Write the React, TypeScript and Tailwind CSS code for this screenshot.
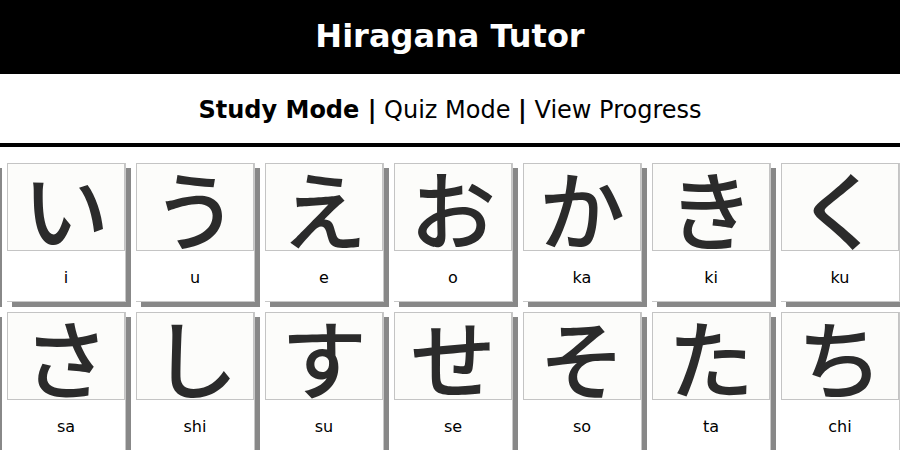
const rows: [string, string][][] = [
  [
    ["あ", "a"], ["い", "i"], ["う", "u"], ["え", "e"], ["お", "o"],
    ["か", "ka"], ["き", "ki"], ["く", "ku"], ["け", "ke"],
  ],
  [
    ["こ", "ko"], ["さ", "sa"], ["し", "shi"], ["す", "su"], ["せ", "se"],
    ["そ", "so"], ["た", "ta"], ["ち", "chi"], ["つ", "tsu"],
  ],
];

function Card({ kana, romaji }: { kana: string; romaji: string }) {
  return (
    <div className="w-[119px] shrink-0 bg-white border-r border-b border-[#c8c8c8] shadow-[5px_5px_0_#888]">
      <div className="h-[88px] border border-[#c4c4c4] bg-[#fcfcfa] flex items-center justify-center overflow-hidden">
        <span className="text-[86px] leading-[88px] font-medium text-[#2b2b2b] font-['Noto_Sans_CJK_JP',sans-serif]">
          {kana}
        </span>
      </div>
      <div className="h-[50px] pt-[3px] flex items-center justify-center text-[16px] text-black">
        {romaji}
      </div>
    </div>
  );
}

export default function App() {
  return (
    <div className="w-[900px] h-[450px] overflow-hidden bg-white font-['DejaVu_Sans',Verdana,sans-serif]">
      <header className="h-[74px] pb-[2px] bg-black flex items-center justify-center">
        <h1 className="text-white text-[32px] font-bold">Hiragana Tutor</h1>
      </header>
      <nav className="h-[73px] pt-[2px] border-b-4 border-black flex items-center justify-center text-[24px] text-black whitespace-pre">
        <span className="font-bold">Study Mode |</span>
        <span> Quiz Mode </span>
        <span className="font-bold">|</span>
        <span> View Progress</span>
      </nav>
      <div className="pt-4 flex flex-col gap-[10px] -ml-[122px]">
        {rows.map((row, i) => (
          <div key={i} className="flex gap-[10px]">
            {row.map(([k, r]) => (
              <Card key={r} kana={k} romaji={r} />
            ))}
          </div>
        ))}
      </div>
    </div>
  );
}
